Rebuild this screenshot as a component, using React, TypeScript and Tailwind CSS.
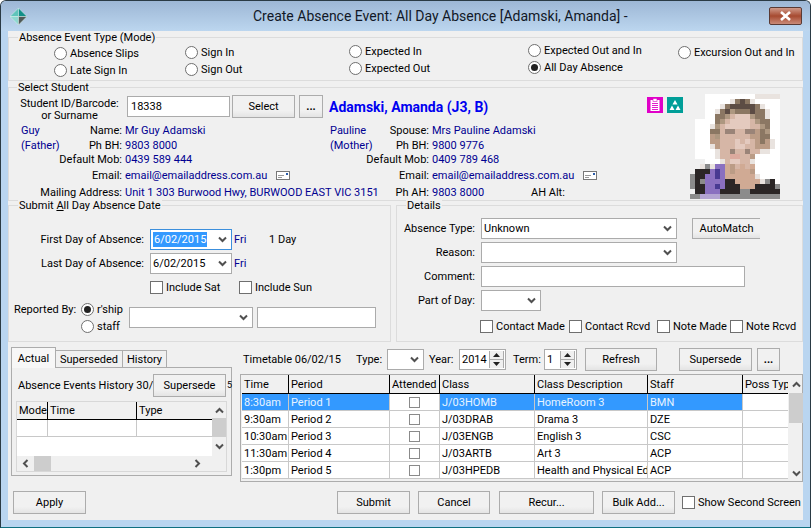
import React from "react";

const Chevron = ({ up, left, right, c = "#505050" }: { up?: boolean; left?: boolean; right?: boolean; c?: string }) => (
  <svg width="9" height="7" viewBox="0 0 9 7" className={left ? "rotate-90" : right ? "-rotate-90" : up ? "rotate-180" : ""}>
    <path d="M1 1.5 L4.5 5 L8 1.5" fill="none" stroke={c} strokeWidth="2" />
  </svg>
);

const Radio = ({ label, checked, className = "" }: { label: string; checked?: boolean; className?: string }) => (
  <div className={"flex items-center whitespace-nowrap " + className}>
    <span className="w-[13px] h-[13px] rounded-full border border-[#6f6f6f] bg-white flex items-center justify-center shrink-0 mr-[3px]">
      {checked && <span className="w-[7px] h-[7px] rounded-full bg-[#222222]" />}
    </span>
    {label}
  </div>
);

const Check = ({ label, className = "" }: { label: string; className?: string }) => (
  <div className={"flex items-center whitespace-nowrap " + className}>
    <span className="w-[13px] h-[13px] border border-[#6f6f6f] bg-white shrink-0 mr-[3px]" />
    {label}
  </div>
);

const Btn = ({ children, className = "" }: { children: React.ReactNode; className?: string }) => (
  <div className={"flex items-center justify-center border border-[#acacac] bg-gradient-to-b from-[#f1f1f1] from-70% to-[#e4e4e4] whitespace-nowrap shrink-0 " + className}>
    {children}
  </div>
);

const Combo = ({ children, className = "" }: { children?: React.ReactNode; className?: string }) => (
  <div className={"flex items-center justify-between border border-[#ababab] bg-white pl-[2px] pr-[4px] shrink-0 " + className}>
    <span className="whitespace-nowrap">{children}</span>
    <Chevron />
  </div>
);

const Input = ({ children, className = "" }: { children?: React.ReactNode; className?: string }) => (
  <div className={"flex items-center border border-[#ababab] bg-white pl-[3px] shrink-0 " + className}>{children}</div>
);

const Spin = ({ value, className = "" }: { value: string; className?: string }) => (
  <div className={"flex items-center justify-between border border-[#ababab] bg-white pl-[2px] pr-px shrink-0 " + className}>
    {value}
    <div className="w-[15px] h-[17px] flex flex-col border-x border-[#ababab] bg-[#f0f0f0]">
      <div className="flex-1 flex items-center justify-center border-b border-[#ababab]">
        <svg width="7" height="4"><path d="M3.5 0 L7 4 L0 4 Z" fill="#222" /></svg>
      </div>
      <div className="flex-1 flex items-center justify-center">
        <svg width="7" height="4"><path d="M0 0 L7 0 L3.5 4 Z" fill="#222" /></svg>
      </div>
    </div>
  </div>
);

const Legend = ({ children, className = "" }: { children: React.ReactNode; className?: string }) => (
  <div className={"absolute -top-[6px] bg-[#f0f0f0] px-[1px] whitespace-nowrap " + className}>{children}</div>
);

const Mail = () => (
  <svg width="14" height="10" viewBox="0 0 14 10">
    <rect x="0.5" y="0.5" width="13" height="8" fill="#fff" stroke="#777" />
    <path d="M2 4.5 H8 M2 6.5 H6" stroke="#999" />
    <rect x="10" y="2" width="2" height="2" fill="#2a5caa" />
  </svg>
);

const Pal: Record<string, string> = {
  ".": "#ffffff", _: "#f0f0f0", h: "#5c4c44", b: "#8b7763", l: "#ad9780", s: "#d6b6a6", p: "#e4cabf", d: "#bb9c86",
  k: "#2b2626", g: "#8b8b8b", v: "#8a70c0", u: "#483a92", L: "#b3a4d2", e: "#9a8478", m: "#dcaa9e", n: "#d0aa94", c: "#e9e3df",
};
const Photo = [
  "___..........ccccc",
  "___.....cbhbc.....",
  "___...cbhhhhhbc...",
  "___..cbhlbbbhbbc..",
  "___..bblsppplbbc..",
  "_....blsppppslbb..",
  "_...clspppppsslb..",
  "_...bbseesseedbl..",
  "_...dlssssssddbb..",
  "_...ddssspspsdbdc.",
  "_...cdsssppssdddc.",
  "_....cssessesscc..",
  "_....cssmmssd.....",
  "___...csppssc.....",
  "__cgcvvndsnsn.....",
  "_kkkvuvndnnnd.....",
  "gkkvvuvnnnnnnc....",
  "gkgvvvvkknnnnncgk.",
  "gkkvvuvkkknnnkkkkg",
  "_kkvvvkkkkggkkkkkk",
  "ggLLLLgggggggggggg",
];

const Blue = "text-[#000090]";

const ParentRow = ({ h, a, al, av, b, bl, bv, mail, extra }: { h: string; a?: string; al: string; av: string; b?: string; bl: string; bv: string; mail?: boolean; extra?: string }) => (
  <div className={"flex items-center whitespace-nowrap " + h}>
    <div className="w-[113px] pl-[12px] flex justify-between shrink-0">
      <span className={Blue}>{a}</span>
      <span>{al}</span>
    </div>
    <div className={"w-[207px] pl-[3px] flex items-center shrink-0 " + Blue}>
      <span className="w-[151px] shrink-0">{av}</span>
      {mail && <Mail />}
    </div>
    <div className="w-[100px] pl-px flex justify-between shrink-0">
      <span className={Blue}>{b}</span>
      <span>{bl}</span>
    </div>
    <div className={"pl-[3px] flex items-center " + Blue}>
      <span className="w-[151px] shrink-0">{bv}</span>
      {mail && <Mail />}
      {extra && <span className="-ml-[52px] text-black">{extra}</span>}
    </div>
  </div>
);

const Field = ({ label, children, className = "" }: { label: string; children: React.ReactNode; className?: string }) => (
  <div className={"flex items-center " + className}>
    <div className="w-[78px] text-right whitespace-nowrap mr-[6px] shrink-0">{label}</div>
    {children}
  </div>
);

const ttCols = "grid grid-cols-[47px_101px_50px_95px_113px_95px_45px]";
const tt = [
  ["8:30am", "Period 1", "J/03HOMB", "HomeRoom 3", "BMN"],
  ["9:30am", "Period 2", "J/03DRAB", "Drama 3", "DZE"],
  ["10:30am", "Period 3", "J/03ENGB", "English 3", "CSC"],
  ["11:30am", "Period 4", "J/03ARTB", "Art 3", "ACP"],
  ["1:30pm", "Period 5", "J/03HPEDB", "Health and Physical Education", "ACP"],
];

const Head = ({ children }: { children: React.ReactNode }) => (
  <div className="border-r border-black pl-[2px] overflow-hidden whitespace-nowrap flex items-center">{children}</div>
);

export default function App() {
  return (
    <div className="w-[811px] h-[528px] overflow-hidden bg-[#b9d5f0] rounded-t-[6px] border border-[#2a3a44] border-b-[#0f6f80] flex flex-col text-[11px] text-black font-['Roboto','Liberation_Sans',sans-serif] leading-none box-border">
      <div className="h-[30px] shrink-0 flex items-center bg-gradient-to-b from-[#9db7d5] to-[#bcd6ef]">
        <svg width="17" height="17" viewBox="0 0 16 16" className="ml-[9px] shrink-0">
          <path d="M8 0 L8 8 L0 8 Z" fill="#5fc4ba" stroke="#d8efec" strokeWidth="0.5" />
          <path d="M8 0 L16 8 L8 8 Z" fill="#128f88" stroke="#d8efec" strokeWidth="0.5" />
          <path d="M0 8 L8 8 L8 16 Z" fill="#8fd8d0" stroke="#d8efec" strokeWidth="0.5" />
          <path d="M8 8 L16 8 L8 16 Z" fill="#505a58" stroke="#d8efec" strokeWidth="0.5" />
        </svg>
        <div className="ml-[226px] text-[14px] text-[#111827] whitespace-nowrap w-[515px]">
          Create Absence Event: All Day Absence [Adamski, Amanda] -
        </div>
        <div className="ml-[1px] w-[33px] h-[18px] shrink-0 rounded-[2px] border border-[#5a3a34] bg-gradient-to-b from-[#cf9a8a] via-[#a64a30] to-[#c98a78] flex items-center justify-center">
          <svg width="13" height="10" viewBox="0 0 13 10">
            <path d="M2 1 L11 9 M11 1 L2 9" stroke="#fff" strokeWidth="2.6" />
          </svg>
        </div>
      </div>

      <div className="mx-[7px] h-[489px] shrink-0 bg-[#f0f0f0] pt-[6px] flex flex-col">
        {/* Mode */}
        <div className="relative h-[44px] border border-[#dcdcdc] shrink-0 flex">
          <Legend className="left-[9px]">Absence Event Type (Mode)</Legend>
          <div className="w-[131px] ml-[45px] pt-[9px] flex flex-col gap-[4px] shrink-0">
            <Radio label="Absence Slips" />
            <Radio label="Late Sign In" />
          </div>
          <div className="w-[164px] pt-[8px] flex flex-col gap-[4px] shrink-0">
            <Radio label="Sign In" />
            <Radio label="Sign Out" />
          </div>
          <div className="w-[179px] pt-[7px] flex flex-col gap-[4px] shrink-0">
            <Radio label="Expected In" />
            <Radio label="Expected Out" />
          </div>
          <div className="w-[150px] pt-[6px] flex flex-col gap-[4px] shrink-0">
            <Radio label="Expected Out and In" />
            <Radio label="All Day Absence" checked />
          </div>
          <div className="pt-[8px]">
            <Radio label="Excursion Out and In" />
          </div>
        </div>

        {/* Student */}
        <div className="relative h-[114px] mt-[6px] border border-[#dcdcdc] shrink-0 flex">
          <Legend className="left-[8px]">Select Student</Legend>
          <div className="w-[681px] shrink-0 pt-[7px]">
            <div className="flex items-center h-[23px]">
              <div className="ml-[11px] w-[99px] mt-[6px] text-center leading-[12px] whitespace-nowrap shrink-0">
                Student ID/Barcode:
                <br />
                or Surname
              </div>
              <Input className="ml-[8px] w-[103px] h-[21px]">18338</Input>
              <Btn className="ml-[2px] w-[63px] h-[23px]">Select</Btn>
              <Btn className="ml-[4px] w-[24px] h-[23px] font-bold">...</Btn>
              <div className="ml-[6px] w-[318px] shrink-0 text-[14px] font-bold text-[#0000f0] whitespace-nowrap">Adamski, Amanda (J3, B)</div>
              <svg width="16" height="16" viewBox="0 0 16 16" className="shrink-0 -mt-[4px]">
                <rect width="16" height="16" fill="#e000c8" />
                <rect x="3.5" y="3" width="9" height="11" fill="#fff" />
                <rect x="6" y="1.5" width="4" height="3" fill="#fff" stroke="#e000c8" strokeWidth="0.6" />
                <path d="M5 6.5 H11 M5 8.5 H11 M5 10.5 H11 M5 12.5 H11" stroke="#e000c8" strokeWidth="0.9" />
              </svg>
              <svg width="16" height="16" viewBox="0 0 16 16" className="ml-[4px] shrink-0 -mt-[4px]">
                <rect width="16" height="16" fill="#009e98" />
                <path d="M8 3 L10.5 7.5 H5.5 Z M5 8.5 L7.5 13 H2.5 Z M11 8.5 L13.5 13 H8.5 Z" fill="#fff" />
              </svg>
            </div>
            <div className="mt-[5px]">
              <ParentRow h="h-[15px]" a="Guy" al="Name:" av="Mr Guy Adamski" b="Pauline" bl="Spouse:" bv="Mrs Pauline Adamski" />
              <ParentRow h="h-[14px]" a="(Father)" al="Ph BH:" av="9803 8000" b="(Mother)" bl="Ph BH:" bv="9800 9776" />
              <ParentRow h="h-[15px]" al="Default Mob:" av="0439 589 444" bl="Default Mob:" bv="0409 789 468" />
              <ParentRow h="h-[17px]" al="Email:" av="email@emailaddress.com.au" bl="Email:" bv="email@emailaddress.com.au" mail />
              <ParentRow h="h-[16px]" al="Mailing Address:" av="Unit 1 303 Burwood Hwy, BURWOOD EAST VIC 3151" bl="Ph AH:" bv="9803 8000" extra="AH Alt:" />
            </div>
          </div>
          <svg width="90" height="105" viewBox="0 0 90 105" className="mt-[6px] shrink-0" shapeRendering="crispEdges">
            {Photo.flatMap((row, y) =>
              row.split("").map((ch, x) => <rect key={x + "-" + y} x={x * 5} y={y * 5} width="5" height="5" fill={Pal[ch]} />)
            )}
          </svg>
        </div>

        {/* Date + details */}
        <div className="flex h-[137px] mt-[4px] shrink-0">
          <div className="relative w-[383px] shrink-0 border border-[#dcdcdc] pt-[23px]">
            <Legend className="left-[9px]">
              Submit <span className="underline">A</span>ll Day Absence Date
            </Legend>
            <div className="flex items-center h-[21px]">
              <div className="w-[135px] text-right whitespace-nowrap shrink-0">First Day of Absence:</div>
              <div className="ml-[6px] w-[82px] h-[21px] border border-[#3c8fdc] bg-white flex items-center justify-between pl-[2px] pr-[4px] shrink-0">
                <span className="bg-[#3399ff] text-white h-[15px] flex items-center px-px">6/02/2015</span>
                <Chevron />
              </div>
              <span className={"ml-[2px] w-[35px] shrink-0 " + Blue}>Fri</span>
              <span>1 Day</span>
            </div>
            <div className="flex items-center h-[21px] mt-[3px]">
              <div className="w-[135px] text-right whitespace-nowrap shrink-0">Last Day of Absence:</div>
              <Combo className="ml-[6px] w-[82px] h-[21px]">6/02/2015</Combo>
              <span className={"ml-[2px] " + Blue}>Fri</span>
            </div>
            <div className="flex items-center h-[13px] mt-[7px] ml-[141px]">
              <Check label="Include Sat" className="w-[89px] shrink-0" />
              <Check label="Include Sun" />
            </div>
            <div className="flex mt-[5px] h-[34px]">
              <div className="ml-[5px] w-[67px] whitespace-nowrap shrink-0 pt-[5px]">Reported By:</div>
              <div className="flex flex-col gap-[4px] w-[48px] shrink-0 pt-[4px]">
                <Radio label="r'ship" checked />
                <Radio label="staff" />
              </div>
              <Combo className="w-[124px] h-[21px] mt-[8px]" />
              <Input className="ml-[4px] w-[119px] h-[21px] mt-[8px]" />
            </div>
          </div>
          <div className="relative ml-[5px] flex-1 border border-[#dcdcdc] pt-[12px]">
            <Legend className="left-[9px]">Details</Legend>
            <Field label="Absence Type:">
              <Combo className="w-[196px] h-[21px]">Unknown</Combo>
              <Btn className="ml-[15px] w-[68px] h-[21px] border-r-0">AutoMatch</Btn>
            </Field>
            <Field label="Reason:" className="mt-[3px]">
              <Combo className="w-[196px] h-[21px]" />
            </Field>
            <Field label="Comment:" className="mt-[3px]">
              <Input className="w-[264px] h-[21px]" />
            </Field>
            <Field label="Part of Day:" className="mt-[3px]">
              <Combo className="w-[60px] h-[21px]" />
            </Field>
            <div className="flex mt-[9px] ml-[83px]">
              <Check label="Contact Made" className="w-[89px] shrink-0" />
              <Check label="Contact Rcvd" className="w-[88px] shrink-0" />
              <Check label="Note Made" className="w-[73px] shrink-0" />
              <Check label="Note Rcvd" />
            </div>
          </div>
        </div>

        {/* Bottom */}
        <div className="flex h-[139px] shrink-0">
          <div className="ml-[3px] w-[221px] shrink-0 pt-[6px]">
            <div className="flex items-end h-[20px] relative z-10">
              <div className="w-[45px] h-[21px] border border-b-0 border-[#acacac] bg-[#f7f7f7] flex items-center justify-center">Actual</div>
              <div className="w-[67px] h-[18px] border border-l-0 border-[#acacac] flex items-center justify-center">Superseded</div>
              <div className="w-[44px] h-[18px] border border-l-0 border-[#acacac] flex items-center justify-center">History</div>
            </div>
            <div className="h-[109px] border border-[#acacac] px-[4px] pt-[6px] -mt-px">
              <div className="flex items-center h-[23px]">
                <span className="whitespace-nowrap w-[137px] overflow-hidden shrink-0 pl-[2px]">Absence Events History 30/05</span>
                <Btn className="w-[73px] h-[23px]">Supersede</Btn>
                <span className="ml-px text-[9px]">5</span>
              </div>
              <div className="mt-[4px] h-[71px] border border-[#d8d8d8] flex flex-col">
                <div className="flex flex-1 min-h-0">
                  <div className="w-[195px] shrink-0">
                    <div className="grid grid-cols-[31px_89px_75px] h-[18px] border-b border-black">
                      <Head>Mode</Head>
                      <Head>Time</Head>
                      <div className="pl-[2px] flex items-center">Type</div>
                    </div>
                    <div className="grid grid-cols-[31px_89px_75px] h-[17px] border-b border-[#c8c8c8] bg-white">
                      <div className="border-r border-[#c8c8c8]" />
                      <div className="border-r border-[#c8c8c8]" />
                      <div />
                    </div>
                    <div className="h-[19px] bg-white" />
                  </div>
                  <div className="flex-1 flex flex-col items-center bg-[#f0f0f0]">
                    <div className="h-[16px] flex items-center"><Chevron up /></div>
                    <div className="w-full h-[19px] bg-[#cdcdcd]" />
                    <div className="flex-1 flex items-center"><Chevron /></div>
                  </div>
                </div>
                <div className="h-[15px] flex items-center shrink-0">
                  <div className="w-[17px] flex justify-center shrink-0"><Chevron left /></div>
                  <div className="w-[17px] h-full bg-[#cdcdcd] shrink-0" />
                  <div className="w-[151px] flex justify-end shrink-0"><Chevron right /></div>
                </div>
              </div>
            </div>
          </div>

          <div className="ml-[8px] flex-1 pt-[6px] min-w-0">
            <div className="flex items-center h-[23px]">
              <span className="ml-[3px] w-[113px] whitespace-nowrap shrink-0">Timetable 06/02/15</span>
              <span className="w-[31px] shrink-0">Type:</span>
              <Combo className="w-[37px] h-[21px]" />
              <span className="ml-[5px] w-[30px] shrink-0">Year:</span>
              <Spin value="2014" className="w-[47px] h-[21px]" />
              <span className="ml-[7px] w-[31px] shrink-0">Term:</span>
              <Spin value="1" className="w-[33px] h-[21px]" />
              <Btn className="ml-[8px] w-[72px] h-[23px]">Refresh</Btn>
              <Btn className="ml-[22px] w-[73px] h-[23px]">Supersede</Btn>
              <Btn className="ml-[5px] w-[23px] h-[23px] font-bold">...</Btn>
            </div>
            <div className="mt-[3px] h-[108px] border border-[#acacac] flex pl-px">
              <div className="w-[546px] shrink-0">
                <div className={ttCols + " h-[19px] border-b border-black"}>
                  <Head>Time</Head>
                  <Head>Period</Head>
                  <Head>Attended</Head>
                  <Head>Class</Head>
                  <Head>Class Description</Head>
                  <Head>Staff</Head>
                  <div className="pl-[2px] flex items-center whitespace-nowrap overflow-hidden">Poss Typ</div>
                </div>
                {tt.map((r, i) => {
                  const cell = "border-r border-[#c8c8c8] pl-[2px] flex items-center overflow-hidden whitespace-nowrap " + (i === 0 ? "bg-[#3399ff] text-[#e8f4ff]" : "bg-white");
                  return (
                    <div key={i} className={ttCols + " h-[17px] border-b border-[#c8c8c8]"}>
                      <div className={cell}>{r[0]}</div>
                      <div className={cell}>{r[1]}</div>
                      <div className="border-r border-[#c8c8c8] bg-white flex items-center justify-center">
                        <span className="w-[11px] h-[11px] border border-[#8a8a8a]" />
                      </div>
                      <div className={cell}>{r[2]}</div>
                      <div className={cell}>{r[3]}</div>
                      <div className={cell}>{r[4]}</div>
                      <div className="bg-white" />
                    </div>
                  );
                })}
              </div>
              <div className="w-[14px] shrink-0 ml-px flex flex-col items-center">
                <div className="h-[18px] flex items-center"><Chevron up /></div>
                <div className="w-full h-[30px] bg-[#cdcdcd]" />
                <div className="flex-1 flex items-end pb-[4px]"><Chevron /></div>
              </div>
            </div>
          </div>
        </div>

        <div className="flex items-center h-[23px] mt-[10px] shrink-0">
          <Btn className="ml-[5px] w-[73px] h-[23px]">Apply</Btn>
          <Btn className="ml-[251px] w-[73px] h-[23px] border-[#3c8fdc]">Submit</Btn>
          <Btn className="ml-[8px] w-[72px] h-[23px]">Cancel</Btn>
          <Btn className="ml-[9px] w-[95px] h-[23px]">Recur...</Btn>
          <Btn className="ml-[8px] w-[73px] h-[23px]">Bulk Add...</Btn>
          <Check label="Show Second Screen" className="ml-[7px]" />
        </div>
      </div>
    </div>
  );
}
